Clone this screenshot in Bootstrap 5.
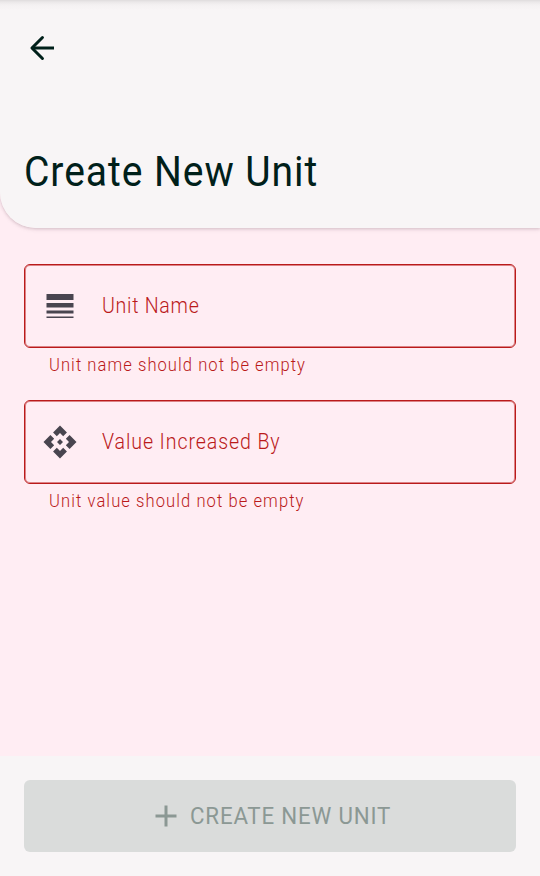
<!DOCTYPE html>
<html lang="en">
<head>
<meta charset="utf-8">
<meta name="viewport" content="width=device-width, initial-scale=1">
<title>Create New Unit</title>
<link href="https://cdn.jsdelivr.net/npm/bootstrap@5.3.0/dist/css/bootstrap.min.css" rel="stylesheet">
<style>
body{background:#ffedf3;font-family:Roboto,"Liberation Sans",sans-serif;color:#00201a}
.top-panel{height:228px;background:linear-gradient(#dfdcdd 0,#ebe8e9 2px,#f4f1f2 5px,#f8f5f6 10px);border-bottom-left-radius:36px;box-shadow:0 1px 3px rgba(60,30,45,.18),0 2px 5px rgba(60,30,45,.06);padding:30px 24px 0}
.page-title{font-size:42px;line-height:56px;margin-top:78px;font-weight:400;white-space:nowrap}
.icon{width:36px;height:36px;flex:none;display:block}
.field{height:84px;border:1px solid #ba1a1a;box-shadow:inset 0 0 0 1px rgba(186,26,26,.5);border-radius:6px;padding:0 17px;color:#ba1a1a}
.field .icon{color:#49454f}
.field-label{font-size:21.5px;line-height:30px;margin-left:24px;font-weight:300}
.help{font-size:18px;line-height:24px;margin:5px 0 0 25px;height:24px;color:#ba1a1a;font-weight:300}
.form-area{padding:36px 24px 0}
.second{margin-top:23.4px}
.bottom-panel{height:120px;background:#f8f5f6;padding:24px}
.btn.create,.btn.create:disabled{height:72px;background:#dadcdb;color:#8b9894;border:0;border-radius:6px;opacity:1;font-size:24.5px;padding:0 0 0 124px}
.create-label{margin-left:6px;line-height:36px}
.stretch{display:inline-block;transform-origin:0 50%;white-space:nowrap}
.t1{transform:scaleX(.93);letter-spacing:1px}
.t2{transform:scaleX(.91);letter-spacing:.8px}
.t3{transform:scaleX(.92);letter-spacing:1.15px}
.t4{transform:scaleX(.91);letter-spacing:1px}
.t5{transform:scaleX(.92);letter-spacing:1.17px}
.t6{transform:scaleX(.91);letter-spacing:.9px}
</style>
<script src="https://cdn.jsdelivr.net/npm/bootstrap@5.3.0/dist/js/bootstrap.bundle.min.js"></script>
</head>
<body class="vh-100 d-flex flex-column overflow-hidden">
<header class="top-panel flex-shrink-0">
<svg class="icon" viewBox="0 0 24 24" fill="none" stroke="#00201a" stroke-width="2" role="img" aria-label="Back"><path d="M20 12H5.5"/><path d="M12.3 5 5.3 12l7 7" stroke-linecap="round" stroke-linejoin="round"/></svg>
<h1 class="page-title mb-0"><span class="stretch t1">Create New Unit</span></h1>
</header>
<main class="form-area flex-grow-1">
<div class="field d-flex align-items-center"><svg class="icon" viewBox="0 0 24 24" fill="currentColor"><path d="M3 17h18v-2H3v2zm0 3h18v-1H3v1zm0-7h18v-3H3v3zm0-9v4h18V4H3z"/></svg><span class="field-label"><span class="stretch t2">Unit Name</span></span></div>
<div class="help"><span class="stretch t3">Unit name should not be empty</span></div>
<div class="field second d-flex align-items-center"><svg class="icon" viewBox="0 0 24 24" fill="currentColor"><path d="M14 12l-2 2-2-2 2-2 2 2zm-2-6l2.12 2.12 2.5-2.5L12 1 7.38 5.62l2.5 2.5L12 6zm-6 6l2.12-2.12-2.5-2.5L1 12l4.62 4.62 2.5-2.5L6 12zm12 0l-2.12 2.12 2.5 2.5L23 12l-4.62-4.62-2.5 2.5L18 12zm-6 6l-2.12-2.12-2.5 2.5L12 23l4.62-4.62-2.5-2.5L12 18z"/></svg><span class="field-label"><span class="stretch t4">Value Increased By</span></span></div>
<div class="help"><span class="stretch t5">Unit value should not be empty</span></div>
</main>
<footer class="bottom-panel flex-shrink-0">
<button class="btn create w-100 d-flex align-items-center" disabled><svg class="icon" viewBox="0 0 24 24" fill="currentColor"><path d="M19 13h-6v6h-2v-6H5v-2h6V5h2v6h6v2z"/></svg><span class="create-label"><span class="stretch t6">CREATE NEW UNIT</span></span></button>
</footer>
</body>
</html>
